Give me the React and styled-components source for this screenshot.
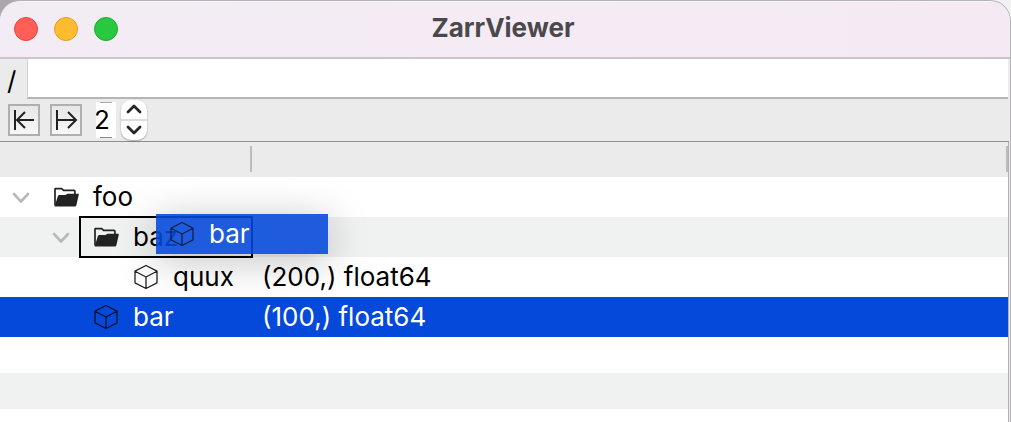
import React, { useState } from "react";
import styled, { createGlobalStyle, css } from "styled-components";

const GlobalStyle = createGlobalStyle`
  *, *::before, *::after { box-sizing: border-box; }
  body { margin: 0; background: #c9c6cb; }
  body, button, input { font-family: Inter, "Liberation Sans", sans-serif; font-size: 26px; color: #000; }
`;

const Desktop = styled.div`
  padding: 1px 1px 0 0;
  height: 100vh;
  overflow: hidden;
  background: linear-gradient(90deg, #aaa7ac 0 200px, #bdbbbf 200px calc(100% - 40px), #f2f2f2 calc(100% - 20px)) top / 100% 40px no-repeat, #a3a3a3;
`;

const Window = styled.main`
  position: relative;
  display: flex;
  flex-direction: column;
  height: 100%;
  padding-right: 1px;
  border-top: 1px solid #f8f3f8;
  border-radius: 20px 20px 0 0;
  box-shadow: 0 0 0 1px #b4b2b5;
  overflow: hidden;
  background: #ebebeb;
`;

const TitleBar = styled.header`
  display: grid;
  grid-template-columns: 1fr auto 1fr;
  align-items: center;
  height: 57px;
  margin-right: -1px;
  padding: 0 18px 2px 14px;
  background: linear-gradient(90deg, #f3ecf5, #f5eaf4);
  border-bottom: 2px solid #c9c5c9;
`;

const Lights = styled.div`
  display: flex;
  gap: 16px;
`;

const Light = styled.button`
  width: 24px;
  height: 24px;
  padding: 0;
  border: 1px solid ${(p) => p.$edge};
  border-radius: 50%;
  background: ${(p) => p.$fill};
`;

const Title = styled.h1`
  margin: 0;
  padding-bottom: 2px;
  font-size: 26px;
  line-height: 32px;
  font-weight: 700;
  color: #4a484b;
`;

const PathRow = styled.label`
  display: flex;
  height: 40px;
  padding-right: 1px;
`;

const PathPrefix = styled.span`
  flex: 0 0 27px;
  padding-left: 7px;
  line-height: 44px;
`;

const PathInput = styled.input`
  flex: 1;
  min-width: 0;
  padding: 0 6px;
  border: solid;
  border-width: 0 0 2px 1px;
  border-color: #d4d4d4 #d4d4d4 #b5b5b5;
  outline: none;
  background: #fff;
`;

const Toolbar = styled.div`
  display: flex;
  align-items: center;
  height: 43px;
  padding: 0 8px 1px;
  border-bottom: 1px solid #8e8f8e;
`;

const ToolButton = styled.button`
  display: grid;
  place-items: center;
  width: 32px;
  height: 32px;
  margin-right: 10px;
  padding: 0;
  border: 2px solid #afafaf;
  background: linear-gradient(#e7e7e7, #f7f7f7);
`;

const LevelInput = styled.input`
  width: 20px;
  height: 36px;
  margin: 0 5px 0 4px;
  padding: 0;
  border: 0;
  outline: none;
  text-indent: -2px;
  background:
    linear-gradient(#aaa, #aaa) 4px 0 / 12px 1px no-repeat,
    linear-gradient(#888, #888) 4px 100% / 12px 1px no-repeat,
    #fff;
`;

const Stepper = styled.div`
  display: flex;
  flex-direction: column;
  width: 26px;
  height: 40px;
  border-radius: 10px;
  background: #fff;
  box-shadow: 0 1px 2px rgba(0, 0, 0, 0.3);
  overflow: hidden;
`;

const StepButton = styled.button`
  flex: 1;
  display: grid;
  place-items: center;
  padding: 0;
  border: 0;
  background: none;

  & + & { border-top: 2px solid #dcdcdc; }
`;

const TreePane = styled.section`
  flex: 1;
  background: #fff;
  border-right: 1px solid #b0b0b0;
`;

const Tree = styled.table`
  width: 100%;
  table-layout: fixed;
  border-collapse: collapse;

  th, td { padding: 0; text-align: left; font-weight: 400; }
`;

const HeadCell = styled.th`
  width: ${(p) => p.$width || "auto"};
  height: 35px;
  background: linear-gradient(#bcbcbc, #bcbcbc) right 4px / 2px 26px no-repeat, #ebebeb;
`;

const Row = styled.tr`
  height: ${(p) => (p.$empty ? 36 : 40)}px;
  background: ${(p) => (p.$selected ? "#0549da" : p.$striped ? "#f0f2f1" : "#fff")};
  color: ${(p) => (p.$selected ? "#fff" : "#000")};
`;

const TreeCell = styled.div`
  display: flex;
  height: 40px;
  padding-left: ${(p) => p.$depth * 40}px;
`;

const Toggle = styled.span`
  display: grid;
  place-items: center;
  flex: 0 0 40px;
  padding: 2px 0 0 2px;
`;

const Item = styled.div`
  flex: 1;
  display: flex;
  align-items: center;
  gap: 13px;
  padding-left: 14px;
  line-height: 40px;

  ${(p) => p.$target && css`
    outline: 2px solid #000;
    outline-offset: -1px;
  `}
`;

const ItemIcon = styled.svg`
  flex: 0 0 26px;
  color: ${(p) => p.$tint || "#222"};
`;

const Detail = styled.div`
  padding-left: 10px;
  line-height: 40px;
  white-space: nowrap;
`;

const DragGhost = styled(Item)`
  position: absolute;
  left: 156px;
  top: 212px;
  width: 172px;
  height: 40px;
  color: #fff;
  background: rgba(5, 73, 218, 0.89);
  box-shadow: 0 6px 40px rgba(0, 0, 0, 0.25);
`;

const Chevron = () => (
  <svg width="18" height="12" viewBox="0 0 18 12" fill="none" stroke="#b9b9b9" strokeWidth="2.6" strokeLinecap="round" strokeLinejoin="round">
    <path d="M2 2 9 9.5 16 2" />
  </svg>
);

const FolderIcon = () => (
  <ItemIcon width="26" height="24" viewBox="0 0 26 24" aria-hidden="true">
    <path d="M1 20.5V4.2Q1 3.6 1.6 3.6H7.6L9.6 5.4H20Q20.9 5.4 20.9 6.2V9" fill="none" stroke="currentColor" strokeWidth="1.7" />
    <path d="M.6 21.5 3.8 11.2Q4.2 10 5.6 10H11.5L13.6 8.8H24Q25 8.8 24.8 9.8L22.3 20.5Q22 21.5 21 21.5Z" fill="currentColor" />
  </ItemIcon>
);

const CubeIcon = ({ tint }) => (
  <ItemIcon $tint={tint} width="26" height="26" viewBox="0 0 26 26" fill="none" stroke="currentColor" strokeWidth="1.3" strokeLinejoin="round" aria-hidden="true">
    <path d="M12 1.5 23 7.2V18.8L12 24.5 1 18.8V7.2ZM1 7.2 12 13 23 7.2M12 13V24.5" />
  </ItemIcon>
);

const ArrowIcon = ({ d }) => (
  <svg width="24" height="24" viewBox="0 0 24 24" fill="none" stroke="#222" strokeWidth="2" aria-hidden="true">
    <path d={d} />
  </svg>
);

const StepIcon = ({ d }) => (
  <svg width="16" height="10" viewBox="0 0 16 10" fill="none" stroke="#262626" strokeWidth="2.8" strokeLinecap="round" strokeLinejoin="round" aria-hidden="true">
    <path d={d} />
  </svg>
);

const nodes = [
  { name: "foo", depth: 0, group: true },
  { name: "baz", depth: 1, group: true, target: true },
  { name: "quux", depth: 2, detail: "(200,) float64" },
  { name: "bar", depth: 1, detail: "(100,) float64", selected: true },
];

export default function App() {
  const [path, setPath] = useState("");
  const [level, setLevel] = useState(2);

  return (
    <Desktop>
      <GlobalStyle />
      <Window>
        <TitleBar>
          <Lights>
            <Light aria-label="Close" $fill="#ff5f57" $edge="#e2463f" />
            <Light aria-label="Minimize" $fill="#febc2e" $edge="#dfa023" />
            <Light aria-label="Zoom" $fill="#28c840" $edge="#1dad2b" />
          </Lights>
          <Title>ZarrViewer</Title>
        </TitleBar>
        <PathRow>
          <PathPrefix>/</PathPrefix>
          <PathInput value={path} onChange={(e) => setPath(e.target.value)} />
        </PathRow>
        <Toolbar>
          <ToolButton aria-label="Collapse all">
            <ArrowIcon d="M3 2V22M22 12H5M13 4 5 12 13 20" />
          </ToolButton>
          <ToolButton aria-label="Expand to level">
            <ArrowIcon d="M3 2V22M3 12H22M14 4 22 12 14 20" />
          </ToolButton>
          <LevelInput aria-label="Level" value={level} onChange={(e) => setLevel(Number(e.target.value) || 0)} />
          <Stepper>
            <StepButton aria-label="Increase level" onClick={() => setLevel(level + 1)}>
              <StepIcon d="M2 8 8 2 14 8" />
            </StepButton>
            <StepButton aria-label="Decrease level" onClick={() => setLevel(Math.max(0, level - 1))}>
              <StepIcon d="M2 2 8 8 14 2" />
            </StepButton>
          </Stepper>
        </Toolbar>
        <TreePane>
          <Tree>
            <thead>
              <tr>
                <HeadCell $width="252px" aria-label="Name" />
                <HeadCell aria-label="Details" />
              </tr>
            </thead>
            <tbody>
              {nodes.map((n, i) => (
                <Row key={i} $striped={i % 2 === 1} $selected={n.selected}>
                  <td>
                    <TreeCell $depth={n.depth}>
                      <Toggle>{n.group && <Chevron />}</Toggle>
                      <Item $target={n.target}>
                        {n.group ? <FolderIcon /> : <CubeIcon tint={n.selected && "#06112e"} />}
                        {n.name}
                      </Item>
                    </TreeCell>
                  </td>
                  <td>
                    <Detail>{n.detail}</Detail>
                  </td>
                </Row>
              ))}
              <Row $empty><td colSpan={2} /></Row>
              <Row $empty $striped><td colSpan={2} /></Row>
            </tbody>
          </Tree>
        </TreePane>
        <DragGhost>
          <CubeIcon tint="#10214f" />
          bar
        </DragGhost>
      </Window>
    </Desktop>
  );
}
